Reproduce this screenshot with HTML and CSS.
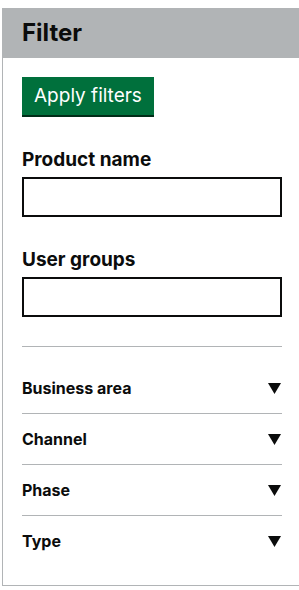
FILE: index.html
```html
<!DOCTYPE html>
<html lang="en">

<head>
    <meta charset="UTF-8">
    <meta name="viewport" content="width=device-width, initial-scale=1.0">
    <title>Filter</title>
    <link rel="stylesheet" href="styles.css">
</head>

<body>
    <aside class="filtro">
        <div class="filtro-topo">
            <h2>Filter</h2>
        </div>
        <div class="filtro-corpo">
            <button class="botao">Apply filters</button>

            <div class="campo">
                <label for="produto">Product name</label>
                <input id="produto" type="text">
            </div>

            <div class="campo">
                <label for="grupos">User groups</label>
                <input id="grupos" type="text">
            </div>

            <hr class="divisor">

            <div class="opcoes">
                <div class="opcao">
                    <span>Business area</span>
                    <svg class="seta" width="13" height="11" viewBox="0 0 13 11"><polygon points="0,0 13,0 6.5,11" /></svg>
                </div>
                <div class="opcao">
                    <span>Channel</span>
                    <svg class="seta" width="13" height="11" viewBox="0 0 13 11"><polygon points="0,0 13,0 6.5,11" /></svg>
                </div>
                <div class="opcao">
                    <span>Phase</span>
                    <svg class="seta" width="13" height="11" viewBox="0 0 13 11"><polygon points="0,0 13,0 6.5,11" /></svg>
                </div>
                <div class="opcao">
                    <span>Type</span>
                    <svg class="seta" width="13" height="11" viewBox="0 0 13 11"><polygon points="0,0 13,0 6.5,11" /></svg>
                </div>
            </div>
        </div>
    </aside>
</body>

</html>
```

FILE: styles.css
```css
html,
body {
    font-family: Inter, 'Liberation Sans', Arial, sans-serif;
    color: #0b0c0c;
    overflow: hidden;
}

body {
    margin: 8px 0 0 2px;
}

.filtro-topo {
    background-color: #b1b4b6;
    padding: 10px 20px;
}

.filtro-topo h2 {
    margin: 0;
    font-size: 24px;
    line-height: 30px;
    font-weight: 700;
}

.filtro-corpo {
    border-left: 1px solid #b1b4b6;
    border-bottom: 1px solid #b1b4b6;
    padding: 19px 17px 19px 19px;
}

.botao {
    display: block;
    font-family: inherit;
    font-size: 19px;
    line-height: 22px;
    padding: 8px 12px;
    border: 0;
    border-radius: 0;
    background-color: #00703c;
    color: white;
    box-shadow: 0 2px 0 #002d18;
    margin-bottom: 32px;
}

.campo {
    width: 260px;
    margin-bottom: 30px;
}

.campo + .campo {
    margin-bottom: 29px;
}

.campo label {
    display: block;
    font-size: 19px;
    line-height: 25px;
    font-weight: 700;
    margin-bottom: 5px;
}

.campo input {
    display: block;
    box-sizing: border-box;
    width: 100%;
    height: 40px;
    border: 2px solid #0b0c0c;
    border-radius: 0;
    margin: 0;
    padding: 5px;
    font-size: 19px;
}

.divisor {
    width: 260px;
    margin: 0;
    border: 0;
    border-top: 1px solid #b1b4b6;
}

.opcoes {
    width: 260px;
    margin-top: 16px;
}

.opcao {
    display: flex;
    justify-content: space-between;
    align-items: center;
    padding: 15px 0;
    font-size: 16px;
    line-height: 20px;
    font-weight: 700;
}

.opcao + .opcao {
    border-top: 1px solid #b1b4b6;
}

.seta {
    fill: #0b0c0c;
    margin-right: 1px;
}
```
